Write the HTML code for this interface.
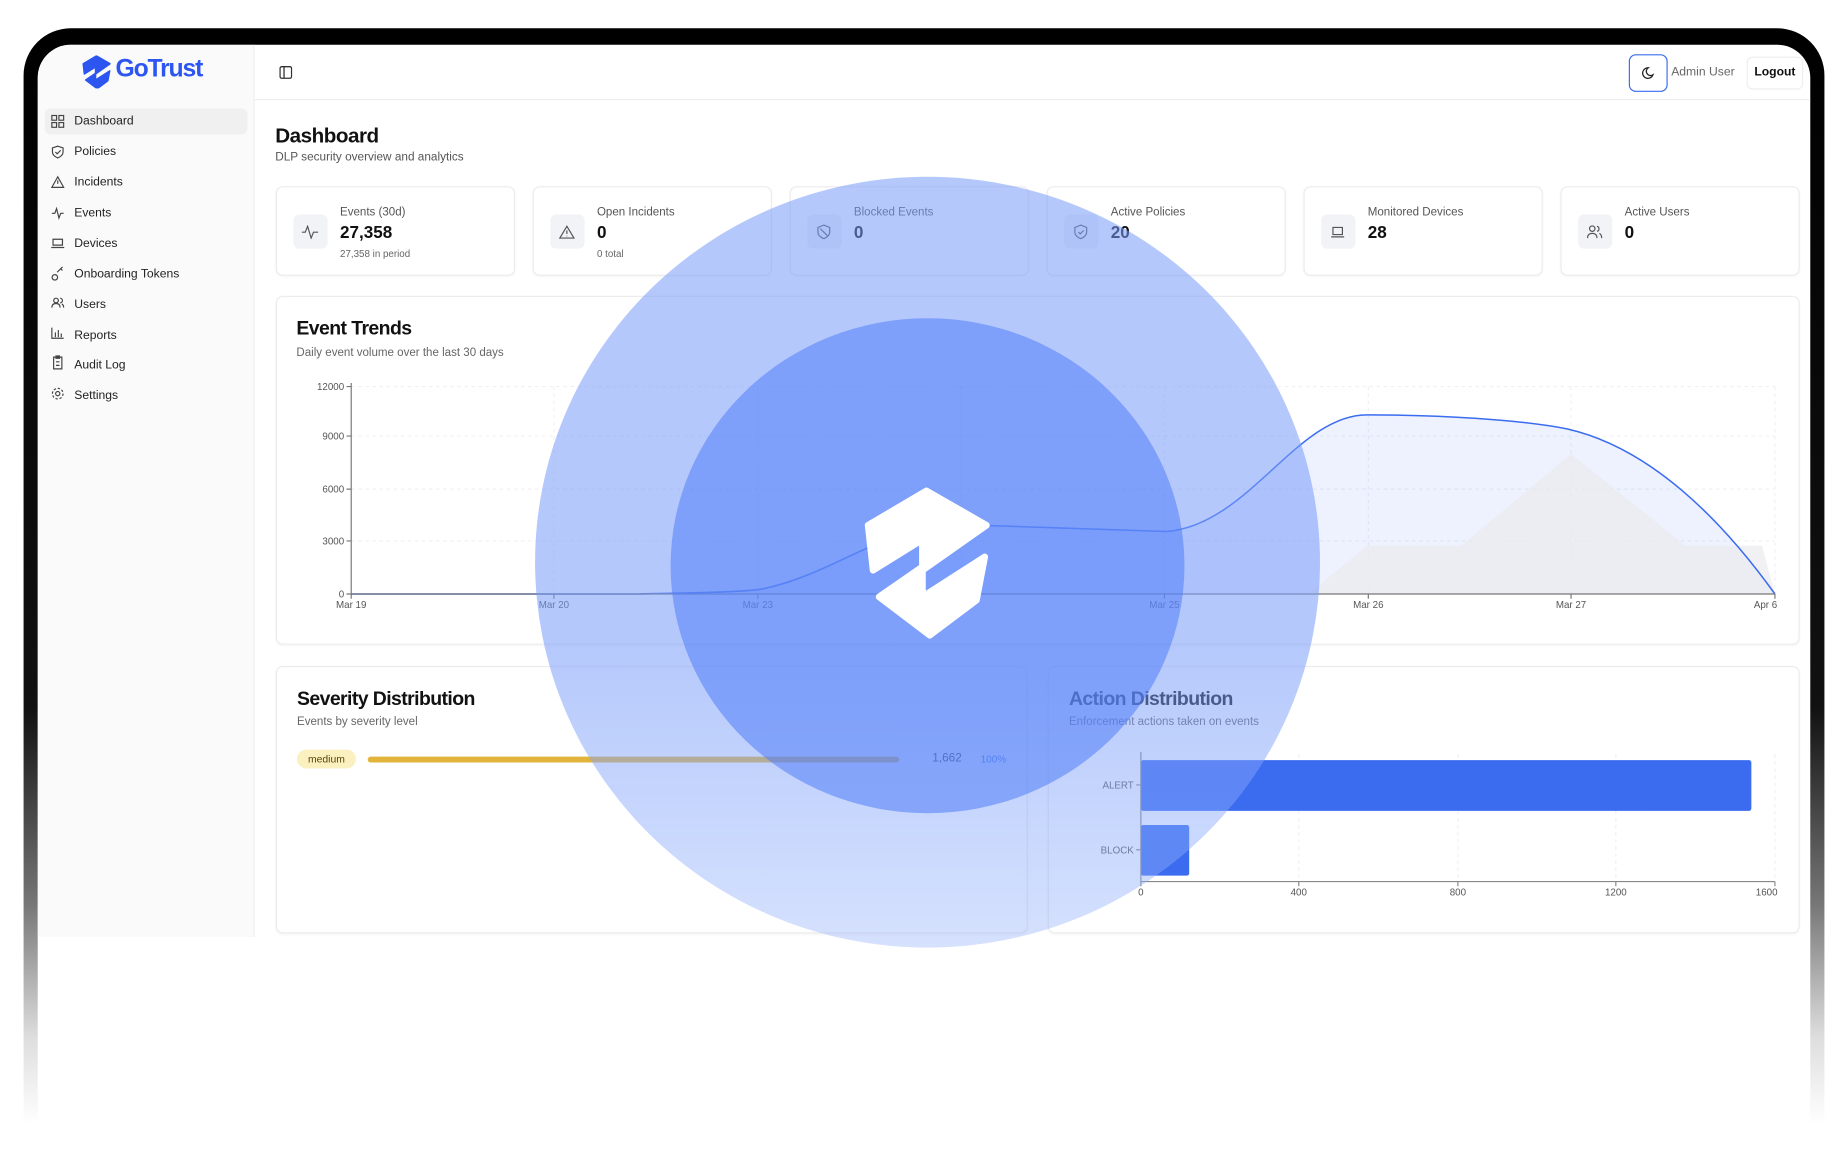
<!DOCTYPE html>
<html><head><meta charset="utf-8">
<style>
*{margin:0;padding:0;box-sizing:border-box}
html,body{width:1848px;height:1171px;overflow:hidden;background:#fff;font-family:"Liberation Sans",sans-serif}
#w{position:absolute;left:0;top:0;width:1568px;height:994px;transform:scale(1.178571);transform-origin:0 0}
.abs{position:absolute}
.frame{left:20px;top:24px;width:1528px;height:930px;border-radius:40px 40px 0 0;background:linear-gradient(to bottom,#000 0,#111 62%,#777 80%,#ddd 92%,#fff 100%)}
.screen{left:32px;top:38px;width:1504px;height:956px;border-radius:28px 28px 0 0;background:#fff;overflow:hidden}
.side{left:0;top:0;width:184px;height:757px;background:#fafafa;border-right:1px solid #eee}
.hdr{left:184px;top:0;width:1320px;height:47px;border-bottom:1px solid #eee}
.nav{position:absolute;left:31px;font-size:10.3px;color:#222;transform:translateY(-50%)}
.card{position:absolute;background:#fff;border:1px solid #ececec;border-radius:6px;box-shadow:0 1px 2px rgba(0,0,0,.04)}
.sc .ib{position:absolute;left:14px;top:23px;width:29px;height:29px;background:#f1f3f6;border-radius:5px;display:flex;align-items:center;justify-content:center}
.sc .l{position:absolute;left:54px;top:16px;font-size:9.8px;color:#555}
.sc .v{position:absolute;left:54px;top:31px;font-size:14.5px;font-weight:bold;color:#111}
.sc .s{position:absolute;left:54px;top:51px;font-size:8.3px;color:#666}
.t{font-size:16.5px;font-weight:bold;color:#111;letter-spacing:-.5px}
.st{font-size:9.8px;color:#666}
.ax{font-size:8.3px;fill:#555;font-family:"Liberation Sans",sans-serif}
</style></head><body><div id="w">
<div class="abs frame"></div>
<div class="abs screen">
 <div class="abs side">
  <svg class="abs" style="left:37.6px;top:8.7px" width="24" height="28.6" viewBox="50 55 365 445"><path d="M55 165 L230 62 L410 165 L218 300 L218 208 L70 300 Z M88 380 L218 290 L218 380 L405 260 L380 390 L240 495 Z" fill="#2d55ef" stroke="#2d55ef" stroke-width="20" stroke-linejoin="round"/></svg>
  <div class="abs" style="left:66px;top:9px;font-size:21px;font-weight:bold;color:#2d55ef;letter-spacing:-1px">GoTrust</div>
  <div class="abs" style="left:6px;top:54px;width:172px;height:22px;background:#f0f0f1;border-radius:5px"></div>
  <div class="nav" style="top:65px">Dashboard</div>
  <div class="nav" style="top:91px">Policies</div>
  <div class="nav" style="top:117px">Incidents</div>
  <div class="nav" style="top:143px">Events</div>
  <div class="nav" style="top:169px">Devices</div>
  <div class="nav" style="top:195px">Onboarding Tokens</div>
  <div class="nav" style="top:221px">Users</div>
  <div class="nav" style="top:247px">Reports</div>
  <div class="nav" style="top:272px">Audit Log</div>
  <div class="nav" style="top:298px">Settings</div>
  <svg class="abs" style="left:11px;top:59px" width="12" height="250" viewBox="0 0 12 250" fill="none" stroke="#444" stroke-width="1">
   <rect x="1" y="1" width="4" height="4"/><rect x="7" y="1" width="4" height="4"/><rect x="1" y="7" width="4" height="4"/><rect x="7" y="7" width="4" height="4"/>
   <path d="M6 27l4.5 1.5v3.5c0 2.5-2 4-4.5 5-2.5-1-4.5-2.5-4.5-5v-3.5z M4 32l1.5 1.5 3-3"/>
   <path d="M6 53l5 9H1z M6 56v3"/>
   <path d="M1 84h2.5l1.5-4 2 8 1.5-4H11"/>
   <path d="M2 106h8v5H2z M0.5 113h11"/>
   <path d="M3.5 136a2.3 2.3 0 1 0 .1 0 M5.5 134l4.5-4.5 M8.5 131l1.5 1.5"/>
   <path d="M4.5 156a2 2 0 1 0 .1 0 M1 164c0-2.5 1.5-3.5 3.5-3.5s3.5 1 3.5 3.5 M8 156a2 2 0 0 1 0 4 M9.5 161c1 .5 1.5 1.5 1.5 3"/>
   <path d="M1 181v9h10 M4 189v-4 M6.5 189v-6 M9 189v-3"/>
   <path d="M2.5 206h7v10h-7z M4.5 205h3v2h-3z M4.5 210h3 M4.5 213h3"/>
   <circle cx="6" cy="237" r="1.8"/><circle cx="6" cy="237" r="4.5" stroke-dasharray="2 1.5"/>
  </svg>
 </div>
 <div class="abs hdr">
  <svg class="abs" style="left:21px;top:18px" width="11" height="11" viewBox="0 0 11 11" fill="none" stroke="#333" stroke-width="1.1"><rect x=".6" y=".6" width="9.8" height="9.8" rx="1.5"/><path d="M4 .6v9.8"/></svg>
  <div class="abs" style="left:1166px;top:8px;width:33px;height:32px;border:1.5px solid #3b6cf0;border-radius:6px"></div>
  <svg class="abs" style="left:1176px;top:18px" width="12" height="12" viewBox="0 0 12 12" fill="none" stroke="#222" stroke-width="1.1"><path d="M6.5 1.5a4.5 4.5 0 1 0 4 6 3.6 3.6 0 0 1-4-6z"/></svg>
  <div class="abs" style="left:1202px;top:18px;font-size:10.3px;color:#666">Admin User</div>
  <div class="abs" style="left:1266px;top:10px;width:48px;height:28px;border:1px solid #eee;border-radius:5px;font-size:10.3px;font-weight:bold;color:#111;text-align:center;line-height:26px">Logout</div>
 </div>
 <div class="abs" style="left:201.5px;top:67px;font-size:17.5px;font-weight:bold;color:#111;letter-spacing:-.4px">Dashboard</div>
 <div class="abs" style="left:201.5px;top:90px;font-size:10px;color:#555">DLP security overview and analytics</div>

 <div class="card sc" style="left:201.5px;top:120px;width:203px;height:76px"><div class="ib"><svg width="14" height="12" viewBox="0 0 14 12" fill="none" stroke="#555"><path d="M0 6h3l2-5 3 10 2-5h4"/></svg></div><div class="l">Events (30d)</div><div class="v">27,358</div><div class="s">27,358 in period</div></div>
 <div class="card sc" style="left:419.5px;top:120px;width:203px;height:76px"><div class="ib"><svg width="14" height="12" viewBox="0 0 14 12" fill="none" stroke="#555"><path d="M7 1l6 10H1z M7 4.5v3 M7 9v.5"/></svg></div><div class="l">Open Incidents</div><div class="v">0</div><div class="s">0 total</div></div>
 <div class="card sc" style="left:637.5px;top:120px;width:203px;height:76px"><div class="ib"><svg width="12" height="13" viewBox="0 0 12 13" fill="none" stroke="#555"><path d="M6 1l5 2v4c0 3-2.5 4.5-5 5.5C3.5 11.5 1 10 1 7V3z M3 4l6 6"/></svg></div><div class="l">Blocked Events</div><div class="v">0</div></div>
 <div class="card sc" style="left:855.5px;top:120px;width:203px;height:76px"><div class="ib"><svg width="12" height="13" viewBox="0 0 12 13" fill="none" stroke="#555"><path d="M6 1l5 2v4c0 3-2.5 4.5-5 5.5C3.5 11.5 1 10 1 7V3z M4 7l1.5 1.5 3-3"/></svg></div><div class="l">Active Policies</div><div class="v">20</div></div>
 <div class="card sc" style="left:1073.5px;top:120px;width:203px;height:76px"><div class="ib"><svg width="14" height="12" viewBox="0 0 14 12" fill="none" stroke="#555"><path d="M3 2h8v6H3z M1.5 10h11"/></svg></div><div class="l">Monitored Devices</div><div class="v">28</div></div>
 <div class="card sc" style="left:1291.5px;top:120px;width:203px;height:76px"><div class="ib"><svg width="14" height="13" viewBox="0 0 14 13" fill="none" stroke="#555"><circle cx="5" cy="4" r="2.3"/><path d="M1 12c0-3 2-4 4-4s4 1 4 4 M9 2a2.2 2.2 0 0 1 0 4.3 M11 8c1.3.6 2 1.8 2 4"/></svg></div><div class="l">Active Users</div><div class="v">0</div></div>

 <div class="card" style="left:201.5px;top:213px;width:1293px;height:296px">
  <div class="abs t" style="left:17px;top:18px">Event Trends</div>
  <div class="abs st" style="left:17px;top:42px">Daily event volume over the last 30 days</div>
 </div>
 <svg class="abs" style="left:0;top:0" width="1504" height="800" viewBox="32 38 1504 800">
  <g stroke="#f0f0f3" stroke-dasharray="3 3">
   <path d="M298 328H1506 M298 370H1506 M298 415H1506 M298 459H1506"/>
   <path d="M470 328V504 M643 328V504 M815 328V504 M988 328V504 M1161 328V504 M1333 328V504 M1506 328V504"/>
  </g>
  <path d="M298 504 L540 504 C600 503 640 502 650 499 C690 490 720 470 760 455 C790 446 820 446 840 446 L990 451 C1060 445 1100 352 1160 352 C1220 352 1290 356 1330 364 C1400 380 1460 440 1506 504 Z" fill="rgba(59,108,240,.09)"/>
  <polygon points="1110,504 1160,463 1240,463 1333,385 1430,463 1495,463 1506,504" fill="rgba(235,235,238,.7)"/>
  <path d="M298 504 L540 504 C600 503 640 502 650 499 C690 490 720 470 760 455 C790 446 820 446 840 446 L990 451 C1060 445 1100 352 1160 352 C1220 352 1290 356 1330 364 C1400 380 1460 440 1506 504" fill="none" stroke="#3b6cf0" stroke-width="1.3"/>
  <path d="M298 325V504H1506" fill="none" stroke="#777" stroke-width="1"/>
  <g stroke="#777"><path d="M294 328h4M294 370h4M294 415h4M294 459h4M294 504h4 M298 504v4M470 504v4M643 504v4M988 504v4M1161 504v4M1333 504v4M1506 504v4"/></g>
  <text class="ax" x="292" y="331" text-anchor="end">12000</text>
  <text class="ax" x="292" y="373" text-anchor="end">9000</text>
  <text class="ax" x="292" y="418" text-anchor="end">6000</text>
  <text class="ax" x="292" y="462" text-anchor="end">3000</text>
  <text class="ax" x="292" y="507" text-anchor="end">0</text>
  <text class="ax" x="298" y="516" text-anchor="middle">Mar 19</text>
  <text class="ax" x="470" y="516" text-anchor="middle">Mar 20</text>
  <text class="ax" x="643" y="516" text-anchor="middle">Mar 23</text>
  <text class="ax" x="988" y="516" text-anchor="middle">Mar 25</text>
  <text class="ax" x="1161" y="516" text-anchor="middle">Mar 26</text>
  <text class="ax" x="1333" y="516" text-anchor="middle">Mar 27</text>
  <text class="ax" x="1498" y="516" text-anchor="middle">Apr 6</text>
 </svg>

 <div class="card" style="left:202px;top:527px;width:638px;height:227px">
  <div class="abs t" style="left:17px;top:18px">Severity Distribution</div>
  <div class="abs st" style="left:17px;top:41px">Events by severity level</div>
  <div class="abs" style="left:17px;top:70px;width:50px;height:16px;background:#fbf0c0;border-radius:8px;font-size:8.8px;color:#5a4500;text-align:center;line-height:16px">medium</div>
  <div class="abs" style="left:77px;top:76px;width:451px;height:5px;background:#e3b43c;border-radius:3px"></div>
  <div class="abs" style="left:556px;top:72px;font-size:10px;color:#222">1,662</div>
  <div class="abs" style="left:597px;top:73px;font-size:8.5px;color:#3b6cf0">100%</div>
 </div>
 <div class="card" style="left:857px;top:527px;width:638px;height:227px">
  <div class="abs t" style="left:17px;top:18px">Action Distribution</div>
  <div class="abs st" style="left:17px;top:41px">Enforcement actions taken on events</div>
 </div>
 <svg class="abs" style="left:0;top:0" width="1504" height="800" viewBox="32 38 1504 800">
  <g stroke="#f0f0f3" stroke-dasharray="3 3"><path d="M1102 640V748M1237 640V748M1371 640V748M1506 640V748"/></g>
  <rect x="968" y="645" width="518" height="43" rx="2" fill="#3b6cf0"/>
  <rect x="968" y="700" width="41" height="43" rx="2" fill="#3b6cf0"/>
  <path d="M968 638V748H1506" fill="none" stroke="#888"/>
  <g stroke="#888"><path d="M964 666h4M964 721h4M968 748v4M1102 748v4M1237 748v4M1371 748v4M1506 748v4"/></g>
  <text class="ax" x="962" y="669" text-anchor="end">ALERT</text>
  <text class="ax" x="962" y="724" text-anchor="end">BLOCK</text>
  <text class="ax" x="968" y="760" text-anchor="middle">0</text>
  <text class="ax" x="1102" y="760" text-anchor="middle">400</text>
  <text class="ax" x="1237" y="760" text-anchor="middle">800</text>
  <text class="ax" x="1371" y="760" text-anchor="middle">1200</text>
  <text class="ax" x="1499" y="760" text-anchor="middle">1600</text>
 </svg>
</div>
<div class="abs" style="left:454px;top:150px;width:666px;height:654px;border-radius:50%;background:linear-gradient(to bottom,rgba(120,155,250,.55) 0%,rgba(120,155,250,.55) 60%,rgba(150,180,250,.4) 100%)"></div>
<div class="abs" style="left:569px;top:270px;width:436px;height:420px;border-radius:50%;background:rgba(80,125,248,.55)"></div>
<svg class="abs" style="left:721px;top:399px" width="127.3" height="152.7" viewBox="0 0 450 540"><path d="M55 165 L230 62 L410 165 L218 300 L218 208 L70 300 Z M88 380 L218 290 L218 380 L405 260 L380 390 L240 495 Z" fill="#fff" stroke="#fff" stroke-width="20" stroke-linejoin="round"/></svg>
</div></body></html>
